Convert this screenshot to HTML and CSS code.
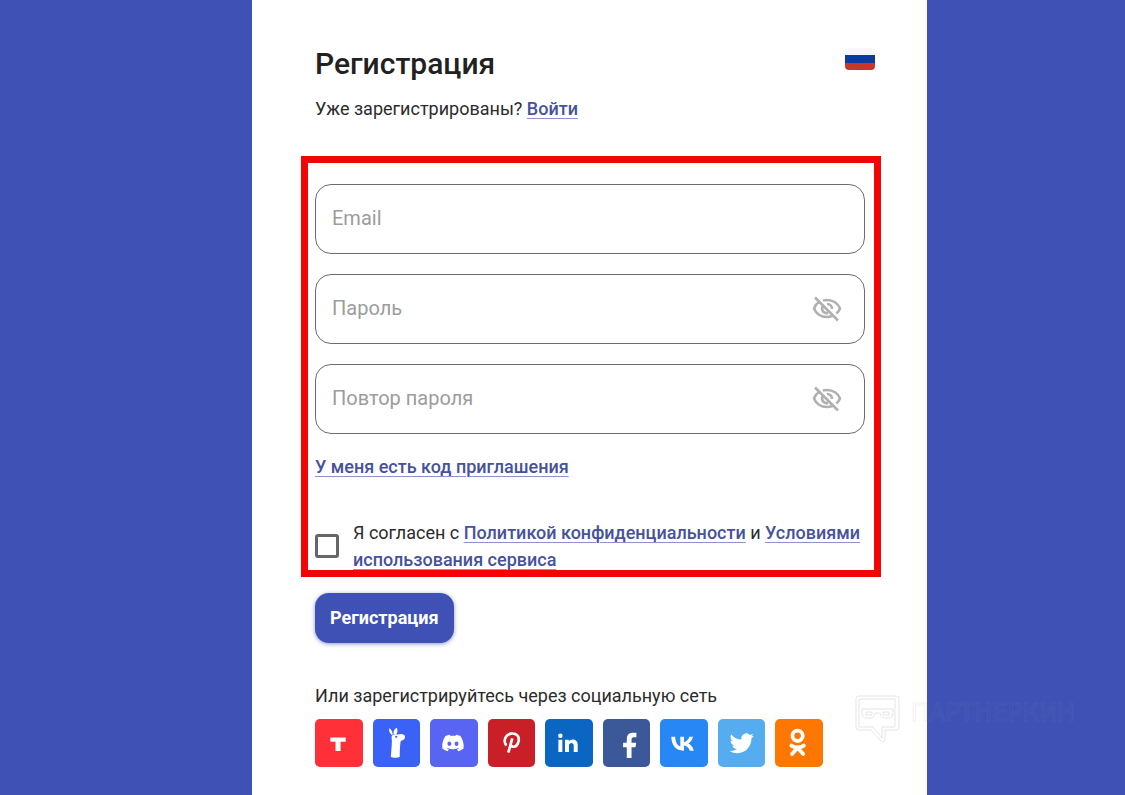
FILE: index.html
```html
<!DOCTYPE html>
<html lang="ru">
<head>
<meta charset="utf-8">
<meta name="viewport" content="width=device-width, initial-scale=1">
<title>Регистрация</title>
<link rel="stylesheet" href="styles.css">
</head>
<body>
<main class="panel">
  <header class="header">
    <h1 class="title">Регистрация</h1>
    <button class="flag" type="button" aria-label="Русский язык"></button>
  </header>
  <p class="signin">Уже зарегистрированы? <a class="link" href="#">Войти</a></p>

  <form class="form">
    <div class="highlight">
      <div class="field">
        <input class="input" type="email" placeholder="Email" aria-label="Email">
      </div>
      <div class="field">
        <input class="input" type="password" placeholder="Пароль" aria-label="Пароль">
        <button class="eye" type="button" aria-label="Показать пароль">
          <svg viewBox="0 0 30 30"><path d="M7 8C4.500 9.500 2.800 12 2 14.500C4 19.500 9 23 15 23C17 23 18.800 22.600 20.500 21.900M11 6.600C12.300 6.200 13.600 6 15 6C21 6 26 9.500 28 14.500C27.200 16.500 26 18.200 24.300 19.600M10.500 12.500C9 16.500 12 19.800 16 19M15 10C18 10 20 12 20 15M3 3.500L26 26.500"/></svg>
        </button>
      </div>
      <div class="field">
        <input class="input" type="password" placeholder="Повтор пароля" aria-label="Повтор пароля">
        <button class="eye" type="button" aria-label="Показать пароль">
          <svg viewBox="0 0 30 30"><path d="M7 8C4.500 9.500 2.800 12 2 14.500C4 19.500 9 23 15 23C17 23 18.800 22.600 20.500 21.900M11 6.600C12.300 6.200 13.600 6 15 6C21 6 26 9.500 28 14.500C27.200 16.500 26 18.200 24.300 19.600M10.500 12.500C9 16.500 12 19.800 16 19M15 10C18 10 20 12 20 15M3 3.500L26 26.500"/></svg>
        </button>
      </div>
      <p class="invite"><a class="link" href="#">У меня есть код приглашения</a></p>
      <div class="agree">
        <input class="checkbox" type="checkbox" id="agree">
        <label class="agree-text" for="agree">Я согласен с <a class="link" href="#">Политикой конфиденциальности</a> и <a class="link" href="#">Условиями использования сервиса</a></label>
      </div>
    </div>
    <button class="submit" type="submit">Регистрация</button>
  </form>

  <p class="social-title">Или зарегистрируйтесь через социальную сеть</p>
  <nav class="social">
    <a class="tile tile-t" href="#" aria-label="T"><svg viewBox="0 0 48 48"><path d="M15.500 18.800H31V23H25.800V32.300H20.700V23H15.500Z"/></svg></a>
    <a class="tile tile-llama" href="#" aria-label="Llama"><svg viewBox="0 0 48 48"><path d="M18.800 16.200C16.500 14 15.500 11 16.700 9.400C18.500 10.500 19.600 13 19.900 15.500Z"/><path d="M20.700 15.300C20.500 12.500 21.500 9.500 24 8.800C25.300 11 24.600 13.800 23.500 15.500Z"/><path fill-rule="evenodd" d="M18.800 18C19 15.800 21 15.200 23.500 15.500C26 15.800 27.500 15 29.500 15.300C32.500 15.500 33 18.500 31.500 20.500C30 22.200 28.200 21.300 27.800 23C27.200 27 27 33 27 38C24.500 39.500 20 39.300 18 38C18.500 31 19.500 24 18.800 18ZM22.300 18A1.100 1.100 0 1 0 24.500 18A1.100 1.100 0 1 0 22.300 18Z"/></svg></a>
    <a class="tile tile-discord" href="#" aria-label="Discord"><svg viewBox="0 0 48 48"><path transform="translate(12.300 13.300) scale(.905)" d="M20.317 4.370a19.791 19.791 0 00-4.885-1.515.074.074 0 00-.079.037c-.211.375-.445.865-.608 1.250-1.845-.276-3.680-.276-5.487 0-.164-.393-.406-.874-.618-1.250a.077.077 0 00-.079-.037 19.736 19.736 0 00-4.885 1.515.070.070 0 00-.032.028C.533 9.046-.319 13.580.099 18.058a.082.082 0 00.031.056c2.053 1.508 4.041 2.423 5.993 3.029a.078.078 0 00.084-.028c.462-.630.873-1.295 1.226-1.994a.076.076 0 00-.042-.106c-.653-.248-1.274-.550-1.872-.892a.077.077 0 01-.008-.128c.126-.094.252-.192.372-.291a.074.074 0 01.078-.011c3.928 1.793 8.180 1.793 12.061 0a.074.074 0 01.079.010c.120.099.246.198.373.292a.077.077 0 01-.007.128 12.299 12.299 0 01-1.873.891.077.077 0 00-.041.107c.360.698.772 1.363 1.225 1.993a.076.076 0 00.084.029c1.961-.607 3.950-1.522 6.002-3.029a.077.077 0 00.031-.055c.500-5.177-.838-9.674-3.549-13.660a.061.061 0 00-.031-.029zM8.020 15.331c-1.183 0-2.157-1.086-2.157-2.419 0-1.333.956-2.419 2.157-2.419 1.211 0 2.176 1.095 2.157 2.419 0 1.333-.956 2.419-2.157 2.419zm7.975 0c-1.183 0-2.157-1.086-2.157-2.419 0-1.333.955-2.419 2.157-2.419 1.211 0 2.176 1.095 2.157 2.419 0 1.333-.946 2.419-2.157 2.419z"/></svg></a>
    <a class="tile tile-pinterest" href="#" aria-label="Pinterest"><svg viewBox="0 0 48 48"><path class="stroke" stroke-width="2.700" d="M18.800 26.500C16.700 25 16.300 21.500 17.800 18.600C20 14.300 26.500 13.300 29.600 16.600C32.700 20 30.300 27.700 26 28C24.300 28.100 23.200 27.300 22.800 26M24.500 19.500L20.500 34"/></svg></a>
    <a class="tile tile-linkedin" href="#" aria-label="LinkedIn"><svg viewBox="0 0 48 48"><circle cx="15.500" cy="17" r="2.300"/><path d="M13.500 21H17.500V33.300H13.500ZM20.200 21H24V22.700C26.300 19.500 33 20 33 26V33.300H29V26.800C29 23.200 24.200 23.400 24.200 26.800V33.300H20.200Z"/></svg></a>
    <a class="tile tile-facebook" href="#" aria-label="Facebook"><svg viewBox="0 0 48 48"><path d="M24 39.300V28.500H20.300V24H24V20.500C24 16 26.500 14 30.300 14H33.700V18.300H31.200C29.300 18.300 28.800 19.200 28.800 20.900V24H33.500L32.800 28.500H28.800V39.300Z"/></svg></a>
    <a class="tile tile-vk" href="#" aria-label="ВКонтакте"><svg viewBox="0 0 48 48"><path d="M23.800 32C16 32 11.600 26.700 11.400 18H15.300C15.500 24.400 18.200 27.100 20.500 27.700V18H24.200V23.500C26.500 23.200 28.800 20.700 29.600 18H33.300C32.700 21.100 30.300 23.800 28.600 24.800C30.300 25.600 33 27.800 34.200 32H30.200C29.300 29.200 27.100 27.100 24.200 26.800V32Z"/></svg></a>
    <a class="tile tile-twitter" href="#" aria-label="Twitter"><svg viewBox="0 0 48 48"><path transform="translate(11.700 12.300) scale(1.020)" d="M23.953 4.570a10 10 0 01-2.825.775 4.958 4.958 0 002.163-2.723c-.951.555-2.005.959-3.127 1.184a4.920 4.920 0 00-8.384 4.482C7.690 8.095 4.067 6.130 1.640 3.162a4.822 4.822 0 00-.666 2.475c0 1.710.870 3.213 2.188 4.096a4.904 4.904 0 01-2.228-.616v.060a4.923 4.923 0 003.946 4.827 4.996 4.996 0 01-2.212.085 4.936 4.936 0 004.604 3.417 9.867 9.867 0 01-6.102 2.105c-.390 0-.779-.023-1.170-.067a13.995 13.995 0 007.557 2.209c9.053 0 13.998-7.496 13.998-13.985 0-.210 0-.420-.015-.630A9.935 9.935 0 0024 4.590z"/></svg></a>
    <a class="tile tile-ok" href="#" aria-label="Одноклассники"><svg viewBox="0 0 48 48"><g class="stroke" stroke-width="3.800"><circle cx="22.800" cy="17" r="5.200"/><path stroke-linecap="round" d="M16.500 26.800C20.500 29.300 25.100 29.300 29.100 26.800M22.800 29L17.200 35.300M22.800 29L28.400 35.300"/></g></svg></a>
  </nav>
</main>
<div class="watermark" aria-hidden="true">
  <svg class="watermark-logo" viewBox="0 0 46 50"><g fill="none" stroke-width="1"><path d="M4 1H41Q44 1 44 4V32Q44 35 41 35H30V45Q28 49 25 45L16 35H4Q1 35 1 32V4Q1 1 4 1Z"/><path d="M5 4H40V32H27V43L18 32H5Q4 32 4 31V5Q4 4 5 4ZM7 14H38V18Q38 23 34 23H30Q26 23 25 18H20Q19 23 15 23H11Q7 23 7 18Z"/><path d="M11 17H17V20H11ZM28 17H34V20H28Z"/></g></svg>
  <span>ПАРТНЕРКИН</span>
</div>
</body>
</html>
```
FILE: styles.css
```css
* {
  box-sizing: border-box;
}

body {
  position: relative;
  display: grid;
  grid-template-columns: 28fr 75fr 22fr;
  min-height: 100vh;
  margin: 0;
  background: #3f51b5;
  color: #2b2b2b;
  font-family: Roboto, "Noto Sans", sans-serif;
  font-size: 18px;
  line-height: 27px;
}

p,
h1 {
  margin: 0;
}

button {
  padding: 0;
  border: 0;
  font: inherit;
  cursor: pointer;
}

.panel {
  grid-column: 2;
  padding: 44px 63px 28px;
  background: #fff;
}

.header {
  display: flex;
  justify-content: space-between;
  align-items: flex-start;
  margin-right: -11px;
}

.title {
  color: #212121;
  font-size: 30px;
  font-weight: 500;
  line-height: 40px;
}

.flag {
  width: 30px;
  height: 22px;
  margin-top: 4px;
  border-radius: 4px;
  background: linear-gradient(#f6f6f6 7px, #0d3b9c 7px, #0d3b9c 15px, #c8352c 15px);
}

.signin {
  margin-top: 11px;
}

.link {
  color: #46529c;
  font-weight: 500;
  text-decoration: underline;
  text-decoration-color: #8a94c8;
  text-decoration-thickness: 1px;
  text-underline-offset: 3px;
}

.highlight {
  display: flex;
  flex-direction: column;
  gap: 20px;
  margin: 34px -17px 0 -14px;
  padding: 21px 9px 0 7px;
  border: 7px solid #f20505;
}

.field {
  display: flex;
  align-items: center;
  height: 70px;
  padding: 0 22px 0 16px;
  border: 1px solid #6c6c6c;
  border-radius: 16px;
}

.input {
  flex: 1;
  min-width: 0;
  padding: 0 0 2px;
  border: 0;
  outline: 0;
  background: none;
  color: #212121;
  font: inherit;
  font-size: 20px;
}

.input::placeholder {
  color: #9c9c9c;
  opacity: 1;
}

.eye {
  width: 30px;
  height: 30px;
  background: none;
}

.eye svg {
  display: block;
  fill: none;
  stroke: #b0b0b0;
  stroke-width: 2.6;
}

.invite {
  margin: -1px 0 19px;
}

.agree {
  display: flex;
  align-items: center;
  gap: 14px;
  margin-bottom: -3px;
}

.checkbox {
  flex: none;
  width: 24px;
  height: 24px;
  margin: 0;
  border: 3px solid #666;
  border-radius: 3px;
  appearance: none;
}

.checkbox:checked {
  background: #3f51b5;
}

.submit {
  height: 50px;
  margin-top: 16px;
  padding: 0 15px 1px;
  border-radius: 14px;
  background: #3f51b5;
  box-shadow: 0 1px 4px rgba(63, 81, 181, 0.6);
  color: #fff;
  font-weight: 700;
}

.social-title {
  margin-top: 39px;
}

.social {
  display: grid;
  grid-template-columns: repeat(9, 1fr);
  gap: 10px;
  max-width: 508px;
  margin-top: 10px;
}

.tile {
  display: block;
  border-radius: 5px;
}

.tile svg {
  display: block;
  width: 100%;
  fill: #fff;
}

.tile .stroke {
  fill: none;
  stroke: #fff;
}

.tile-t { background: #ff3038; }
.tile-llama { background: #3b62f6; }
.tile-discord { background: #5865f2; }
.tile-pinterest { background: #c91f27; }
.tile-linkedin { background: #0a66c2; }
.tile-facebook { background: #3b5998; }
.tile-vk { background: #2787f5; }
.tile-twitter { background: #55acee; }
.tile-ok { background: #ff7700; }

.watermark {
  position: absolute;
  right: 50px;
  bottom: 50px;
  display: flex;
  gap: 10px;
  color: transparent;
  font-family: "DejaVu Sans", sans-serif;
  font-size: 24px;
  line-height: 36px;
  pointer-events: none;
  -webkit-text-stroke: 1px rgba(140, 140, 160, 0.14);
}

.watermark-logo {
  width: 46px;
  height: 50px;
  stroke: rgba(140, 140, 140, 0.22);
}
```
